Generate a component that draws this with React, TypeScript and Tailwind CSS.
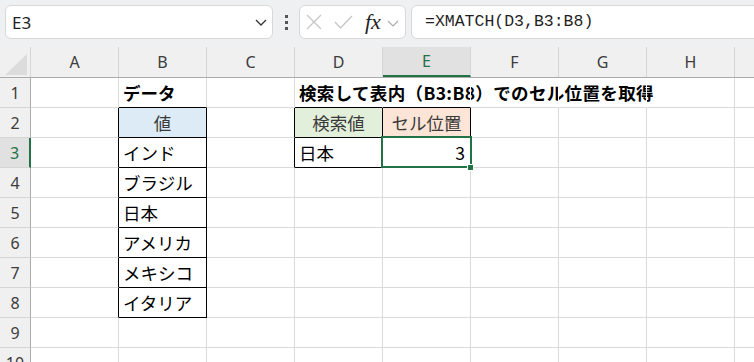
import React from "react";

type CellData = { t: string; align?: "l" | "c" | "r"; bold?: boolean; bg?: string; dim?: boolean; wide?: boolean };

const COLS = ["A", "B", "C", "D", "E", "F", "G", "H", ""];
const ROWS = [1, 2, 3, 4, 5, 6, 7, 8, 9, 10];

const DATA: Record<string, CellData> = {
  "1,1": { t: "データ", bold: true },
  "1,3": { t: "検索して表内（B3:B8）でのセル位置を取得", bold: true, wide: true },
  "2,1": { t: "値", align: "c", bg: "blue", dim: true },
  "2,3": { t: "検索値", align: "c", bg: "green", dim: true },
  "2,4": { t: "セル位置", align: "c", bg: "peach", dim: true },
  "3,1": { t: "インド" },
  "3,3": { t: "日本" },
  "3,4": { t: "3", align: "r" },
  "4,1": { t: "ブラジル" },
  "5,1": { t: "日本" },
  "6,1": { t: "アメリカ" },
  "7,1": { t: "メキシコ" },
  "8,1": { t: "イタリア" },
};

const bordered = (r: number, c: number) =>
  (c === 1 && r >= 2 && r <= 8) || ((c === 3 || c === 4) && (r === 2 || r === 3));

function Cell({ r, c }: { r: number; c: number }) {
  const d = DATA[`${r},${c}`];
  const rb = bordered(r, c) || bordered(r, c + 1);
  const bb = bordered(r, c) || bordered(r + 1, c);
  const hideR = r === 1 && c >= 3 && c <= 6;
  const rCls = hideR ? "border-r-white" : rb ? "border-r-black" : "border-r-[#dadada]";
  const bCls = bb ? "border-b-black" : "border-b-[#dadada]";
  const bg =
    d?.bg === "blue" ? "bg-[#ddebf7]" : d?.bg === "green" ? "bg-[#e2efda]" : d?.bg === "peach" ? "bg-[#fce4d6]" : "";
  const align =
    d?.align === "c" ? "justify-center" : d?.align === "r" ? "justify-end pr-[5px]" : "justify-start pl-[4px]";
  const selected = r === 3 && c === 4;
  return (
    <div
      className={`relative flex items-center shrink-0 w-[88px] h-[30px] border-r border-b ${rCls} ${bCls} ${bg} ${align}`}
    >
      {d && (
        <span
          className={`whitespace-nowrap text-[17.5px] leading-none ${d.wide ? "tracking-[0.35px]" : ""} ${d.bold ? "font-bold text-black" : d.dim ? "text-[#3a3a3a]" : "text-black"}`}
        >
          {d.t}
        </span>
      )}
      {selected && (
        <>
          <div className="absolute left-[-2px] top-[-2px] w-[91px] h-[32px] border-2 border-[#217346] z-10" />
          <div className="absolute left-[84px] top-[26px] w-[7px] h-[7px] bg-[#217346] border border-white z-20" />
        </>
      )}
    </div>
  );
}

export default function App() {
  return (
    <div className="w-[754px] h-[362px] overflow-hidden bg-white font-['Noto_Sans_CJK_JP',sans-serif]">
      {/* Toolbar */}
      <div className="h-[47px] bg-[#eef0f2] flex items-start pt-[5px] pl-[5px] overflow-hidden">
        <div className="w-[268px] h-[34px] shrink-0 bg-white border border-[#d8d8d8] rounded-[6px] flex items-center justify-between pl-[6px] pr-[5px]">
          <span className="font-['Noto_Sans',sans-serif] text-[17px] text-[#1f1f1f] leading-none">E3</span>
          <svg width="12" height="7" viewBox="0 0 12 7" fill="none">
            <path d="M1 1 L6 6 L11 1" stroke="#333" strokeWidth="1.3" />
          </svg>
        </div>
        <div className="w-[26px] h-[34px] shrink-0 flex flex-col items-center justify-center gap-[3px]">
          <div className="w-[3px] h-[3px] bg-[#555]" />
          <div className="w-[3px] h-[3px] bg-[#555]" />
          <div className="w-[3px] h-[3px] bg-[#555]" />
        </div>
        <div className="w-[107px] h-[34px] shrink-0 bg-white border border-[#d8d8d8] rounded-[6px] flex items-center pl-[6px]">
          <svg width="16" height="16" viewBox="0 0 16 16" fill="none">
            <path d="M1 1 L15 15 M15 1 L1 15" stroke="#c6c6c6" strokeWidth="1.3" />
          </svg>
          <svg className="ml-[12px]" width="19" height="14" viewBox="0 0 19 14" fill="none">
            <path d="M1 7 L6.5 13 L18 1" stroke="#c6c6c6" strokeWidth="1.3" />
          </svg>
          <span className="ml-[12px] font-['Liberation_Serif',serif] italic text-[22px] leading-none text-[#222]">
            fx
          </span>
          <svg className="ml-[6px] mt-[2px]" width="12" height="7" viewBox="0 0 12 7" fill="none">
            <path d="M1 1 L6 6 L11 1" stroke="#aaa" strokeWidth="1.1" />
          </svg>
        </div>
        <div className="ml-[5px] w-[380px] h-[34px] shrink-0 bg-white border border-[#d8d8d8] rounded-[6px] flex items-center pl-[13px]">
          <span className="font-['Liberation_Mono',monospace] text-[16.5px] leading-none text-[#1f1f1f]">
            =XMATCH(D3,B3:B8)
          </span>
        </div>
      </div>

      {/* Column headers */}
      <div className="flex h-[31px] bg-[#f0f0f0] border-b border-[#ababab]">
        <div className="relative w-[31px] shrink-0 h-full border-r border-[#d5d5d5]">
          <svg className="absolute left-[5px] top-[7px]" width="22" height="21" viewBox="0 0 22 21">
            <polygon points="22,0 22,21 0,21" fill="#dcdcdc" />
          </svg>
        </div>
        {COLS.map((col, i) => (
          <div
            key={i}
            className={`w-[88px] shrink-0 h-full border-r border-[#d5d5d5] flex items-center justify-center font-['Noto_Sans',sans-serif] text-[16px] ${i === 4 ? "bg-[#e1e1e1] text-[#217346] border-b-2 border-b-[#217346]" : "text-[#3c3c3c]"}`}
          >
            {col}
          </div>
        ))}
      </div>

      {/* Rows */}
      {ROWS.map((r) => (
        <div key={r} className="flex h-[30px]">
          <div
            className={`w-[31px] shrink-0 h-[30px] border-b border-b-[#d5d5d5] flex items-center justify-center font-['Noto_Sans',sans-serif] text-[16px] ${r === 3 ? "bg-[#e1e1e1] text-[#217346] border-r-2 border-r-[#217346]" : "bg-[#f0f0f0] text-[#3c3c3c] border-r border-r-[#ababab]"}`}
          >
            {r}
          </div>
          {COLS.map((_, c) => (
            <Cell key={c} r={r} c={c} />
          ))}
        </div>
      ))}
    </div>
  );
}
